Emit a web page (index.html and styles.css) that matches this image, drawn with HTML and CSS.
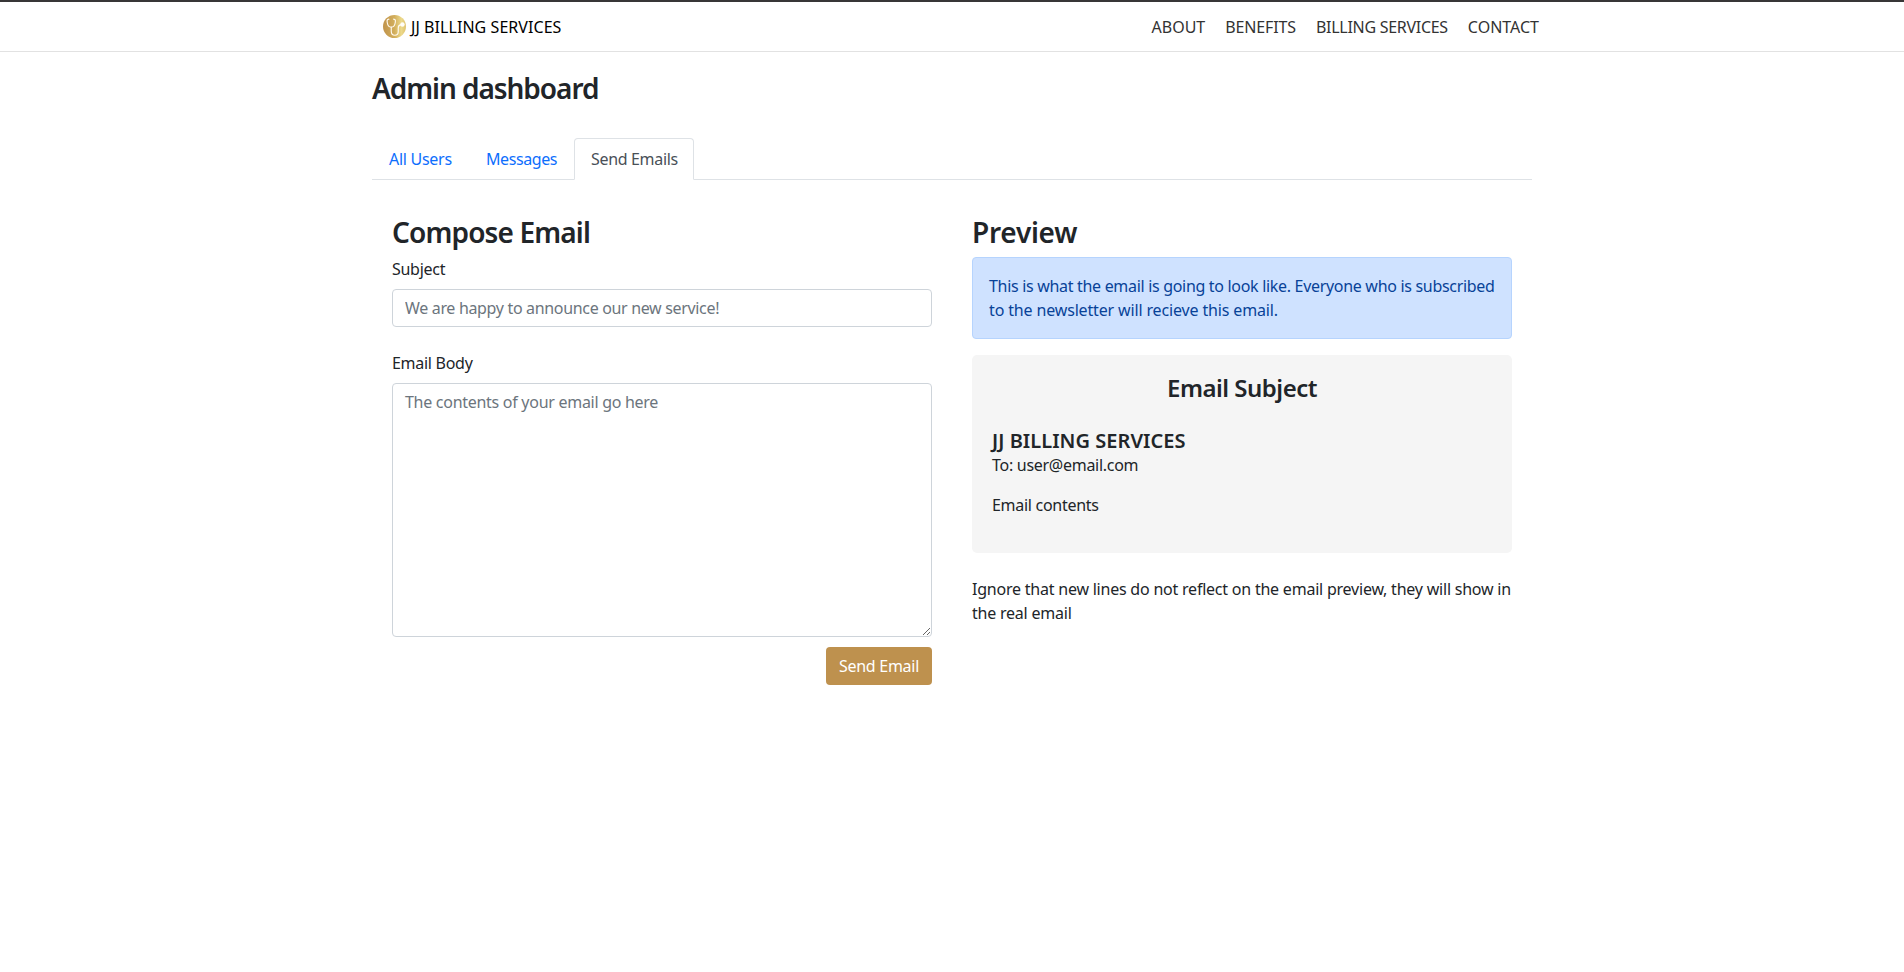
FILE: index.html
```
<!DOCTYPE html>
<html lang="en">
<head>
<meta charset="utf-8">
<title>JJ Billing Services - Admin dashboard</title>
<link rel="stylesheet" href="styles.css">
</head>
<body>
<header class="navbar">
  <div class="navbar-inner">
    <a class="brand">
      <svg class="logo" viewBox="0 0 22 22">
        <defs><linearGradient id="gold" x1="0" y1="0" x2="1" y2="0"><stop offset="0" stop-color="#c0934c"/><stop offset=".5" stop-color="#d2ae5c"/><stop offset=".8" stop-color="#ecd98a"/><stop offset="1" stop-color="#dfc26f"/></linearGradient></defs>
        <circle cx="11" cy="11" r="11" fill="url(#gold)"/>
        <g fill="none" stroke="#fffaf0" stroke-width="1.1" stroke-linecap="round">
          <path d="M5.6 4C3.6 4 3.8 5.6 4.1 7.4C4.5 9.9 5.8 11.6 7.9 11.6C10 11.6 11.3 9.9 11.7 7.4C12 5.6 12.2 4 10.2 4"/>
          <path d="M7.9 11.8V15.6C7.9 18.2 9.2 19.4 11.3 19.4C13.5 19.4 14.6 18.1 14.6 15.8V12.5C14.6 10.7 15.4 9.5 17 9.5"/>
        </g>
        <circle cx="18.6" cy="9.1" r="2.1" fill="#fffdf8"/>
      </svg>
      <span>JJ BILLING SERVICES</span>
    </a>
    <nav class="links">
      <a class="about">ABOUT</a>
      <a class="benefits">BENEFITS</a>
      <a class="services">BILLING SERVICES</a>
      <a class="contact">CONTACT</a>
    </nav>
  </div>
</header>
<main class="container">
  <h1 class="page-title">Admin dashboard</h1>
  <div class="tabs">
    <a class="tab tab-users">All Users</a>
    <a class="tab tab-messages">Messages</a>
    <a class="tab tab-send active">Send Emails</a>
  </div>
  <div class="columns">
    <section class="column">
      <h2 class="heading compose-title">Compose Email</h2>
      <label class="label" for="subject">Subject</label>
      <input class="control" id="subject" type="text" placeholder="We are happy to announce our new service!">
      <label class="label body-label" for="body">Email Body</label>
      <textarea class="control body-field" id="body" placeholder="The contents of your email go here"></textarea>
      <button class="send">Send Email</button>
    </section>
    <section class="column">
      <h2 class="heading preview-title">Preview</h2>
      <div class="alert">This is what the email is going to look like. Everyone who is subscribed<br><span class="alert-end">to the newsletter will recieve this email.</span></div>
      <div class="email">
        <h3 class="email-subject">Email Subject</h3>
        <h4 class="sender">JJ BILLING SERVICES</h4>
        <p class="recipient">To: user@email.com</p>
        <p class="contents">Email contents</p>
      </div>
      <p class="note">Ignore that new lines do not reflect on the email preview, they will show in<br>the real email</p>
    </section>
  </div>
</main>
</body>
</html>
```
FILE: styles.css
```
* { box-sizing: border-box; }
body {
  margin: 0;
  background: #fff;
  color: #212529;
  font: 400 16px/24px "Noto Sans", sans-serif;
  letter-spacing: -0.28px;
}
h1, h2, h3, h4, p { margin: 0; font-weight: 600; }
p { font-weight: 400; }

.navbar {
  height: 52px;
  border-top: 2px solid #383637;
  border-bottom: 1px solid #e2e2e2;
}
.navbar-inner {
  display: flex;
  justify-content: space-between;
  align-items: center;
  width: 1156px;
  height: 49px;
  margin: 0 auto;
  padding-left: 9px;
}
.brand { display: flex; align-items: center; gap: 5px; color: #000; letter-spacing: 0.06px; }
.logo { width: 23px; height: 23px; }
.links { display: flex; gap: 20px; color: #333; margin-right: -9px; }
.about { letter-spacing: 0; }
.benefits { letter-spacing: -0.14px; }
.services { letter-spacing: -0.28px; }
.contact { letter-spacing: 0; }

.container { width: 1160px; margin: 0 auto; padding-top: 19px; }
.page-title { font-size: 28px; line-height: 34px; letter-spacing: -1.05px; }
.tabs {
  display: flex;
  height: 42px;
  margin-top: 33px;
  border-bottom: 1px solid #dee2e6;
}
.tab {
  height: 42px;
  padding: 8px 16px;
  border: 1px solid transparent;
  border-radius: 4px 4px 0 0;
  color: #0d6efd;
  white-space: nowrap;
}
.tab-users { width: 97px; }
.tab-messages { width: 105px; letter-spacing: -0.42px; }
.tab-send { width: 120px; letter-spacing: -0.33px; }
.active { border-color: #dee2e6 #dee2e6 #fff; background: #fff; color: #495057; }

.columns { display: grid; grid-template-columns: 1fr 1fr; padding-top: 35px; }
.column { display: flex; flex-direction: column; padding: 0 20px; }
.heading { margin-bottom: 8px; font-size: 28px; line-height: 34px; }
.compose-title { letter-spacing: -0.85px; }
.preview-title { letter-spacing: -0.25px; }
.label { margin-bottom: 8px; }
.body-label { margin-top: 24px; }
.control {
  width: 100%;
  height: 38px;
  padding: 6px 12px;
  border: 1px solid #ced4da;
  border-radius: 4px;
  background: #fff;
  color: #212529;
  font: inherit;
  letter-spacing: -0.33px;
}
.control::placeholder { color: #6c757d; opacity: 1; }
.body-field { height: 254px; resize: vertical; letter-spacing: -0.28px; }
.send {
  align-self: flex-end;
  width: 106px;
  height: 38px;
  margin-top: 10px;
  padding: 0;
  border: 0;
  border-radius: 4px;
  background: #be914e;
  color: #fff;
  font: inherit;
  letter-spacing: -0.28px;
}
.alert {
  height: 82px;
  padding: 16px;
  border: 1px solid #b6d4fe;
  border-radius: 4px;
  background: #cfe2ff;
  color: #084298;
  letter-spacing: -0.31px;
  white-space: nowrap;
}
.alert-end { letter-spacing: -0.15px; }
.email {
  height: 198px;
  margin-top: 16px;
  padding: 18px 20px;
  border-radius: 5px;
  background: #f5f5f5;
}
.email-subject { font-size: 24px; line-height: 29px; text-align: center; letter-spacing: -0.5px; }
.sender { margin-top: 27px; font-size: 20px; line-height: 24px; letter-spacing: 0.03px; }
.contents { margin-top: 16px; }
.note { margin-top: 24px; letter-spacing: -0.22px; white-space: nowrap; }
```
